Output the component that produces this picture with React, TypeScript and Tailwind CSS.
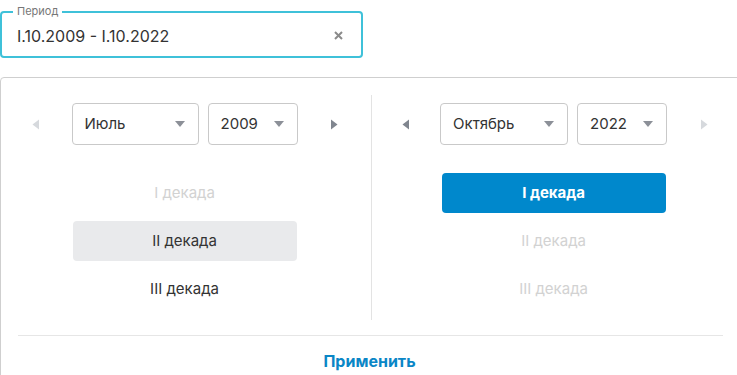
import React from "react";

const font = { fontFamily: "Inter, 'Noto Sans', sans-serif" };

function Arrow({ dir, active }: { dir: "left" | "right"; active: boolean }) {
  return (
    <svg width="8" height="11" viewBox="0 0 8 11" className={active ? "text-[#80868f]" : "text-[#d6d9dd]"}>
      {dir === "left" ? <path d="M7 0.5 L7 10.5 L0.5 5.5 Z" fill="currentColor" /> : <path d="M1 0.5 L1 10.5 L7.5 5.5 Z" fill="currentColor" />}
    </svg>
  );
}

function Select({ value, width }: { value: string; width: string }) {
  return (
    <div className={`${width} h-[42px] border border-[#c9c9c9] rounded-[4px] flex items-center justify-between pl-[12px] pr-[13px] text-[15px] text-[#333]`}>
      <span>{value}</span>
      <svg width="10" height="6" viewBox="0 0 10 6">
        <path d="M0 0 L10 0 L5 6 Z" fill="#8c9098" />
      </svg>
    </div>
  );
}

type Decade = { label: string; state: "disabled" | "normal" | "hover" | "selected" };

function DecadeList({ items }: { items: Decade[] }) {
  return (
    <div className="flex flex-col gap-[8px] mt-[28px]">
      {items.map((d) => (
        <div
          key={d.label}
          className={
            "w-[224px] h-[40px] rounded-[4px] flex items-center justify-center " +
            (d.state === "selected"
              ? "bg-[#0088cc] text-white font-bold text-[15px]"
              : d.state === "hover"
              ? "bg-[#e9eaec] text-[#333] text-[15px]"
              : d.state === "normal"
              ? "text-[#333] text-[15px]"
              : "text-[#d2d2d2] text-[15px]")
          }
        >
          {d.label}
        </div>
      ))}
    </div>
  );
}

function Column({
  month,
  monthW,
  year,
  prevActive,
  nextActive,
  items,
  divider,
}: {
  month: string;
  monthW: string;
  year: string;
  prevActive: boolean;
  nextActive: boolean;
  items: Decade[];
  divider?: boolean;
}) {
  return (
    <div className={`w-[370px] shrink-0 mt-[17px] pt-[8px] pb-[11px] ${divider ? "border-l border-[#e3e3e3]" : ""}`}>
      <div className="flex items-start">
        <div className={`${divider ? "w-[70px]" : "w-[73px]"} flex justify-center mt-[16px]`}>
          <Arrow dir="left" active={prevActive} />
        </div>
        <div className="flex flex-col items-center">
          <div className="flex gap-[9px]">
            <Select value={month} width={monthW} />
            <Select value={year} width="w-[90px]" />
          </div>
          <DecadeList items={items} />
        </div>
        <div className="w-[76px] flex justify-center mt-[16px]">
          <Arrow dir="right" active={nextActive} />
        </div>
      </div>
    </div>
  );
}

export default function App() {
  return (
    <div className="w-[737px] h-[375px] bg-white overflow-hidden" style={font}>
      <div className="pt-[11px]">
        <div className="relative w-[363px] h-[47px] border-2 border-[#3fc1d9] rounded-[4px] flex items-center pl-[15px] pr-[18px]">
          <span className="absolute -top-[8px] left-[11px] bg-white px-[4px] text-[11px] leading-[13px] text-[#777]">Период</span>
          <span className="flex-1 text-[16px] text-[#333] mt-[2px]">I.10.2009 - I.10.2022</span>
          <svg width="9" height="9" viewBox="0 0 9 9" className="mt-[1px]">
            <path d="M1 1 L8 8 M8 1 L1 8" stroke="#8a8a8a" strokeWidth="2" />
          </svg>
        </div>
      </div>
      <div className="mt-[19px] w-[760px] border border-[#cfcfcf] rounded-tl-[4px] bg-white">
        <div className="flex">
          <Column
            month="Июль"
            monthW="w-[127px]"
            year="2009"
            prevActive={false}
            nextActive={true}
            items={[
              { label: "I декада", state: "disabled" },
              { label: "II декада", state: "hover" },
              { label: "III декада", state: "normal" },
            ]}
          />
          <Column
            month="Октябрь"
            monthW="w-[128px]"
            year="2022"
            prevActive={true}
            nextActive={false}
            divider
            items={[
              { label: "I декада", state: "selected" },
              { label: "II декада", state: "disabled" },
              { label: "III декада", state: "disabled" },
            ]}
          />
        </div>
        <div className="ml-[17px] w-[705px] border-t border-[#e6e6e6] mt-[15px]" />
        <div className="w-[737px] flex justify-center pt-[13px] pb-[20px]">
          <span className="text-[16px] font-bold text-[#0a86c6]">Применить</span>
        </div>
      </div>
    </div>
  );
}
